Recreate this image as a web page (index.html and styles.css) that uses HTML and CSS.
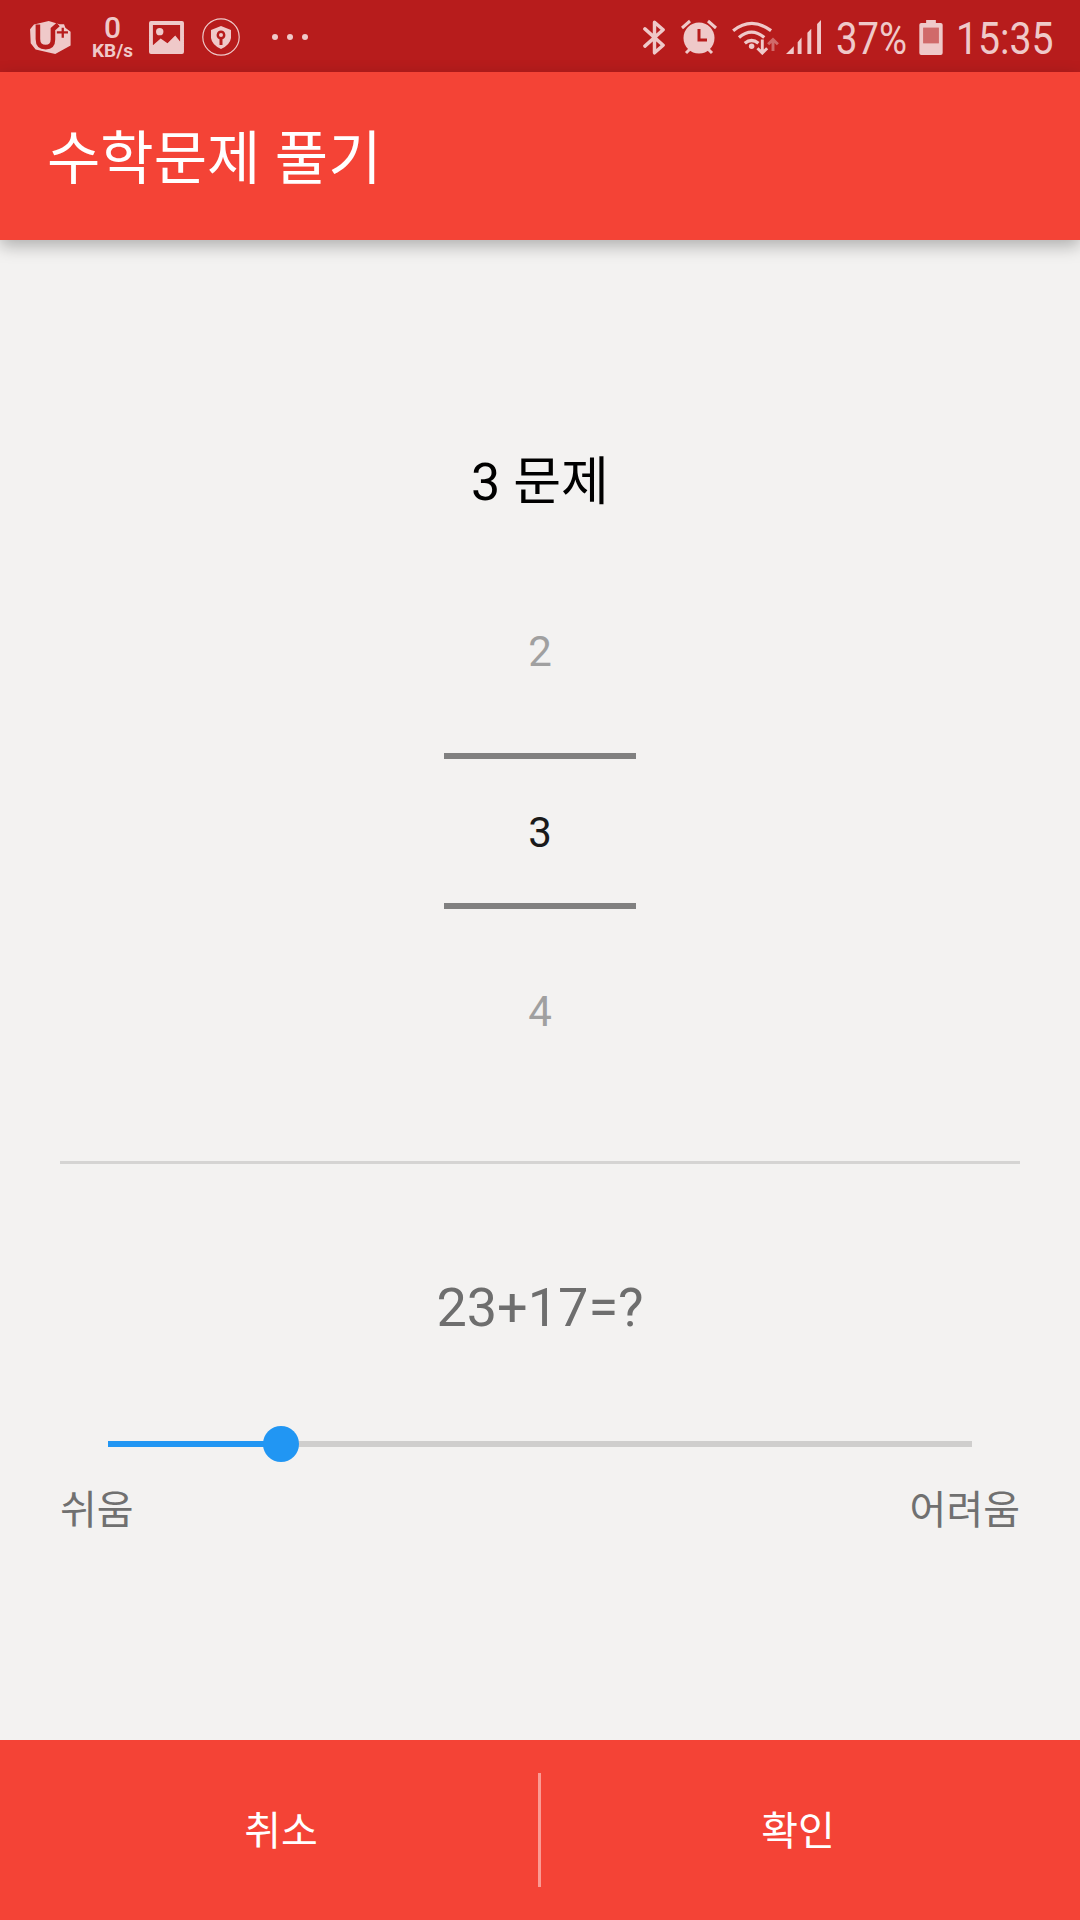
FILE: index.html
```html
<!DOCTYPE html>
<html lang="ko">
<head>
<meta charset="utf-8">
<title>수학문제 풀기</title>
<link rel="stylesheet" href="styles.css">
</head>
<body>
<div class="app">
  <header class="status">
    <div class="status-left">
      <svg class="ic-u" viewBox="15 14 128 104"><path fill="#efc9c9" d="M18 42 L30 28 L75 17 L108 27 L122 27 L126 38 L142 50 L142 92 L95 118 L35 104 L20 85Z"/><path fill="none" stroke="#b71c1c" stroke-width="14" d="M42 28 V72 Q42 97 66 97 Q88 97 88 74 V42 L104 28"/><path fill="none" stroke="#b71c1c" stroke-width="7" d="M100 52 H134 M118 38 V68"/></svg>
      <div class="net"><span class="net-n">0</span><span class="net-u">KB/s</span></div>
      <svg class="ic-img" viewBox="0 0 36 34"><path fill="#efc9c9" fill-rule="evenodd" d="M2 0H34Q36 0 36 2V32Q36 34 34 34H2Q0 34 0 32V2Q0 0 2 0Z M4 4V25L12 18L19 23L27 15L32 21V4Z"/><circle cx="11" cy="11" r="3.800" fill="#efc9c9"/></svg>
      <svg class="ic-sh" viewBox="0 0 38 38"><circle cx="19" cy="19" r="18.200" fill="none" stroke="#efc9c9" stroke-width="1.200"/><path fill="#efc9c9" fill-rule="evenodd" d="M19 8 L29 12 V20 Q28 27 19 31 Q10 27 9 20 V12Z M19 12.500a4.500 4.500 0 0 0-1.500 8.700V27h3v-5.800A4.500 4.500 0 0 0 19 12.500Z"/><circle cx="19" cy="17" r="2" fill="#efc9c9"/></svg>
      <div class="dots"><i></i><i></i><i></i></div>
    </div>
    <div class="status-right">
      <svg class="ic-bt" viewBox="0 0 24 38"><path fill="none" stroke="#efc9c9" stroke-width="3.600" stroke-linecap="round" stroke-linejoin="round" d="M2 10 L21 27 L12 35 V3 L21 11 L2 28"/></svg>
      <svg class="ic-al" viewBox="0 0 36 36"><circle cx="18" cy="19" r="15.500" fill="#efc9c9"/><path stroke="#efc9c9" stroke-width="3" d="M1 9 L9 2 M35 9 L27 2 M5 34 L9 30 M31 34 L27 30"/><path fill="none" stroke="#b71c1c" stroke-width="3" d="M18 10V21H26"/></svg>
      <svg class="ic-wf" viewBox="0 0 48 36"><g fill="none" stroke="#efc9c9" stroke-width="3.400"><path d="M1 11 Q20 -4 40 11"/><path d="M7 18 Q20 7 33 18"/><path d="M13 24 Q20 18 27 24"/></g><circle cx="20" cy="27" r="2.800" fill="#efc9c9"/><path stroke="#efc9c9" stroke-width="3" fill="none" d="M31 20V34M26 29L31 34L36 29"/><path stroke="#efc9c9" stroke-opacity=".45" stroke-width="3" fill="none" d="M42 32V20M37 25L42 20L47 25"/></svg>
      <svg class="ic-sg" viewBox="0 0 36 36"><path fill="#efc9c9" d="M0 35 L8 27 V35Z M12 23 L16 18 V35 H12Z M22 13 L26 9 V35 H22Z M32 4 L36 0 V35 H32Z"/></svg>
      <span class="st-text pct">37%</span>
      <svg class="ic-bat" viewBox="0 0 24 36"><path fill="#efc9c9" fill-rule="evenodd" d="M7 0H17V3H22Q24 3 24 5V34Q24 36 22 36H2Q0 36 0 34V5Q0 3 2 3H7Z M4 8V24H20V8Z"/><rect x="4" y="8" width="16" height="16" fill="#efc9c9" opacity=".45"/></svg>
      <span class="st-text time">15:35</span>
    </div>
  </header>
  <div class="toolbar"><h1 class="title">수학문제 풀기</h1></div>
  <main class="content">
    <p class="count">3 문제</p>
    <div class="picker">
      <div class="pick dim">2</div>
      <div class="pick cur">3</div>
      <div class="pick dim">4</div>
    </div>
    <hr class="rule">
    <p class="problem">23+17=?</p>
    <div class="slider"><div class="fill"></div><div class="thumb"></div></div>
    <div class="ends"><span>쉬움</span><span>어려움</span></div>
  </main>
  <footer class="actions">
    <button class="act">취소</button>
    <span class="sep"></span>
    <button class="act">확인</button>
  </footer>
</div>
</body>
</html>
```

FILE: styles.css
```css
* { box-sizing: border-box; }
html, body { margin: 0; padding: 0; }
body { font-family: Roboto, "Noto Sans CJK KR", sans-serif; background: #f3f2f1; }
.app { width: 1080px; height: 1920px; display: flex; flex-direction: column; overflow: hidden; }

.status { height: 72px; background: #b71c1c; display: flex; justify-content: space-between; align-items: center; padding: 2px 27px 0 29px; color: #efc9c9; flex: none; }
.status-left, .status-right { display: flex; align-items: center; }
.ic-u { width: 42px; height: 34px; }
.net { width: 41px; margin-left: 21px; display: flex; flex-direction: column; align-items: center; font-family: Roboto, sans-serif; }
.net-n { font-size: 30px; height: 26px; line-height: 26px; font-weight: 500; }
.net-u { font-size: 19px; font-weight: 700; line-height: 16px; margin-top: 2px; white-space: nowrap; }
.ic-img { width: 35px; height: 33px; margin-left: 16px; }
.ic-sh { width: 38px; height: 38px; margin-left: 18px; }
.dots { display: flex; gap: 9px; margin-left: 32px; }
.dots i { width: 6px; height: 6px; border-radius: 50%; background: #efc9c9; }
.ic-bt { width: 23px; height: 37px; }
.ic-al { width: 36px; height: 36px; margin-left: 15px; }
.ic-wf { width: 47px; height: 35px; margin-left: 15px; }
.ic-sg { width: 35px; height: 35px; margin-left: 7px; }
.st-text { font-family: Roboto, sans-serif; font-size: 45px; line-height: 48px; margin-top: 3px; display: inline-block; white-space: nowrap; transform-origin: left center; }
.pct { width: 70px; margin-left: 15px; transform: scaleX(.85); }
.ic-bat { width: 24px; height: 35px; margin-left: 13px; }
.time { width: 97px; margin-left: 13px; transform: scaleX(.87); }

.toolbar { height: 168px; background: #f44336; display: flex; align-items: center; padding: 8px 47px 0; flex: none; box-shadow: 0 6px 16px rgba(0,0,0,.28); position: relative; }
.title { margin: 0; font-size: 58px; font-weight: 400; color: #fff; line-height: 1.2; }

.content { flex: 1; display: flex; flex-direction: column; align-items: center; padding-top: 210px; }
.count { margin: 0; font-size: 52px; line-height: 66px; color: #000; }
.picker { margin-top: 45px; width: 192px; display: flex; flex-direction: column; }
.pick { height: 180px; display: flex; align-items: center; justify-content: center; font-size: 42px; }
.dim { color: #a0a0a0; }
.cur { color: #1a1a1a; height: 156px; margin: 12px 0; padding-top: 2px; border-top: 6px solid #808080; border-bottom: 6px solid #808080; }
.rule { width: 960px; height: 3px; margin: 60px 0 0; border: 0; background: #d5d4d3; flex: none; }
.problem { margin: 111px 0 0; font-size: 54px; line-height: 66px; color: #6e6e6e; }
.slider { width: 864px; height: 6px; margin-top: 100px; background: #cfcecd; position: relative; flex: none; }
.fill { width: 173px; height: 6px; background: #2196f3; }
.thumb { position: absolute; left: 155px; top: -15px; width: 36px; height: 36px; border-radius: 50%; background: #2196f3; }
.ends { width: 960px; display: flex; justify-content: space-between; margin-top: 34px; font-size: 40px; line-height: 60px; color: #707070; }

.actions { height: 180px; background: #f44336; display: flex; align-items: center; padding: 0 25px 0 24px; flex: none; }
.act { flex: 1; height: 100%; border: 0; background: none; color: #fff; font: inherit; font-size: 40px; padding: 0 0 4px; }
.sep { width: 3px; height: 114px; background: #fb9a93; flex: none; }
```
